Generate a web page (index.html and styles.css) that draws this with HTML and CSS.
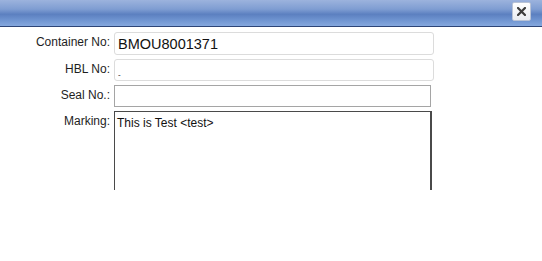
FILE: index.html
```html
<!DOCTYPE html>
<html lang="en">
<head>
    <meta charset="UTF-8">
    <title>Container</title>
    <link rel="stylesheet" href="styles.css">
</head>
<body>
    <div class="titlebar">
        <button class="close" type="button" aria-label="Close">
            <svg width="9" height="9" viewBox="0 0 9 9">
                <path d="M1 1 L8 8 M8 1 L1 8" stroke="#3c3c3c" stroke-width="2.2" stroke-linecap="square"/>
            </svg>
        </button>
    </div>
    <div class="form-area">
        <form class="form-grid">
            <label for="container-no">Container No:</label>
            <input type="text" id="container-no" class="big" value="BMOU8001371">

            <label for="hbl-no">HBL No:</label>
            <input type="text" id="hbl-no" class="small" value="-">

            <label for="seal-no">Seal No.:</label>
            <input type="text" id="seal-no" class="plain">

            <label for="marking">Marking:</label>
            <div class="marking-wrap">
                <textarea id="marking">This is Test &lt;test&gt;</textarea>
            </div>
        </form>
    </div>
</body>
</html>
```

FILE: styles.css
```css
body {
    margin: 0;
    padding: 0;
    background-color: #ffffff;
    font-family: "Liberation Sans", Arial, sans-serif;
    font-size: 12px;
    color: #222;
}

.titlebar {
    height: 26px;
    border-bottom: 1px solid #2d4577;
    background: linear-gradient(to bottom, #9cb3dd 0%, #7f9dd2 35%, #5c80c0 55%, #6d92cf 75%, #85a8de 100%);
    display: flex;
    justify-content: flex-end;
    align-items: flex-start;
    padding-right: 11px;
}

.close {
    margin-top: 2px;
    width: 19px;
    height: 19px;
    padding: 0;
    border: 1px solid #b9c3d6;
    border-radius: 2px;
    background: linear-gradient(to bottom, #ffffff, #e9ecf1);
    display: flex;
    align-items: center;
    justify-content: center;
}

.form-area {
    padding-top: 5px;
    height: 163px;
    overflow: hidden;
}

.form-grid {
    display: grid;
    grid-template-columns: 110px auto;
    column-gap: 4px;
    row-gap: 4px;
    align-items: start;
    justify-content: start;
}

label {
    text-align: right;
    color: #1e1e1e;
    padding-top: 3px;
}

input[type="text"] {
    box-sizing: border-box;
    margin: 0;
    font-family: "Liberation Sans", Arial, sans-serif;
    color: #111;
}

.big {
    width: 320px;
    height: 23px;
    border: 1px solid #dcdcdc;
    border-radius: 3px;
    padding: 1px 3px 0;
    font-size: 14.5px;
}

.small {
    width: 320px;
    height: 22px;
    border: 1px solid #dcdcdc;
    border-radius: 3px;
    padding: 8px 3px 0;
    font-size: 8px;
}

.plain {
    width: 317px;
    height: 22px;
    border: 1px solid #a5a5a5;
    padding: 0 3px;
    font-size: 12px;
}

.marking-wrap {
    width: 318px;
    height: 79px;
    overflow: hidden;
}

textarea {
    box-sizing: border-box;
    width: 318px;
    height: 120px;
    margin: 0;
    border: 1px solid #4a4a4a;
    border-right-width: 2px;
    padding: 4px 2px;
    font-family: "Liberation Sans", Arial, sans-serif;
    font-size: 12px;
    color: #111;
    resize: none;
}
```
